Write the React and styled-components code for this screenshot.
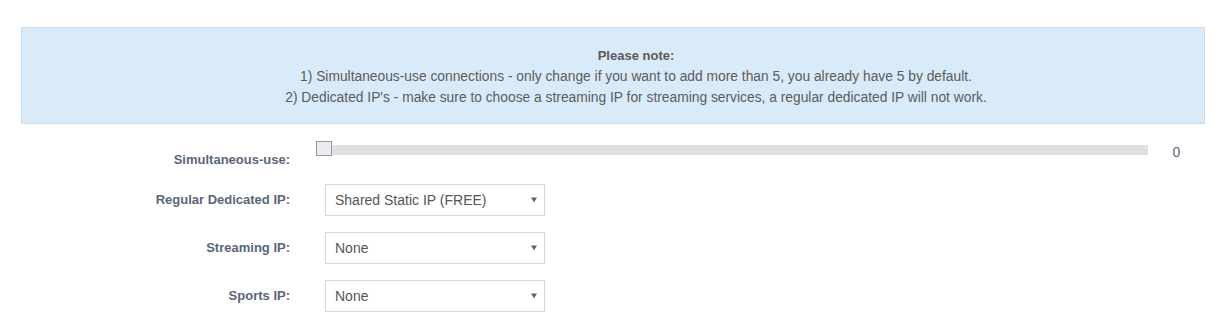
import React from "react";
import styled, { createGlobalStyle } from "styled-components";

const Global = createGlobalStyle`
  html, body { margin: 0; padding: 0; background: #ffffff; }
  body { font-family: "Liberation Sans", Arial, sans-serif; }
  * { box-sizing: border-box; }
`;

const Page = styled.div`
  width: 1229px;
  height: 328px;
  padding: 27px 24px 0 21px;
  background: #fff;
`;

const Notice = styled.div`
  background: #d9eaf9;
  border: 1px solid #c9ddef;
  padding: 17px 10px 15px 56px;
  text-align: center;
  color: #5c5c5c;
  font-size: 13.8px;
  line-height: 21px;
`;

const NoticeTitle = styled.div`
  font-weight: bold;
  font-size: 13px;
  color: #595959;
`;

const Form = styled.div`
  display: grid;
  grid-template-columns: 271px 1fr;
  column-gap: 33px;
  row-gap: 16px;
  margin-top: 11px;
`;

const Label = styled.div`
  text-align: right;
  font-weight: bold;
  font-size: 13px;
  line-height: 16px;
  color: #5a6677;
  padding-right: 2px;
  padding-top: ${(p) => p.$top}px;
`;

const SliderRow = styled.div`
  display: flex;
  align-items: flex-start;
  height: 32px;
  padding-top: 6px;
`;

const Track = styled.div`
  position: relative;
  flex: 1;
  height: 10px;
  margin-top: 4px;
  background: #dfe0df;
`;

const Handle = styled.div`
  position: absolute;
  left: 0;
  top: -4px;
  margin-left: -9px;
  width: 16px;
  height: 15px;
  border: 1px solid #8d9cb0;
  background: #ebebeb;
`;

const Value = styled.div`
  width: 57px;
  text-align: center;
  font-size: 14px;
  line-height: 16px;
  margin-top: 3px;
  color: #5a6677;
`;

const SelectWrap = styled.div`
  position: relative;
  width: 220px;
  height: 32px;
`;

const Select = styled.select`
  appearance: none;
  -webkit-appearance: none;
  width: 100%;
  height: 100%;
  border: 1px solid #d8d8d8;
  background: #fff;
  padding: 0 24px 0 9px;
  font-family: "Liberation Sans", Arial, sans-serif;
  font-size: 14px;
  color: #555;
  outline: none;
  border-radius: 0;
`;

const Caret = styled.svg`
  position: absolute;
  right: 8px;
  top: 13px;
  width: 6px;
  height: 6px;
  pointer-events: none;
`;

function Dropdown({ value, options }) {
  return (
    <SelectWrap>
      <Select defaultValue={value}>
        {options.map((o) => (
          <option key={o}>{o}</option>
        ))}
      </Select>
      <Caret viewBox="0 0 6 6">
        <path d="M0 0.5 L6 0.5 L3 5.5 Z" fill="#5c6678" />
      </Caret>
    </SelectWrap>
  );
}

export default function App() {
  return (
    <>
      <Global />
      <Page>
        <Notice>
          <NoticeTitle>Please note:</NoticeTitle>
          <div>
            1) Simultaneous-use connections - only change if you want to add more than 5, you already have 5 by default.
          </div>
          <div>
            2) Dedicated IP's - make sure to choose a streaming IP for streaming services, a regular dedicated IP will not work.
          </div>
        </Notice>
        <Form>
          <Label $top={17}>Simultaneous-use:</Label>
          <SliderRow>
            <Track>
              <Handle />
            </Track>
            <Value>0</Value>
          </SliderRow>

          <Label $top={8}>Regular Dedicated IP:</Label>
          <Dropdown value="Shared Static IP (FREE)" options={["Shared Static IP (FREE)"]} />

          <Label $top={8}>Streaming IP:</Label>
          <Dropdown value="None" options={["None"]} />

          <Label $top={8}>Sports IP:</Label>
          <Dropdown value="None" options={["None"]} />
        </Form>
      </Page>
    </>
  );
}
